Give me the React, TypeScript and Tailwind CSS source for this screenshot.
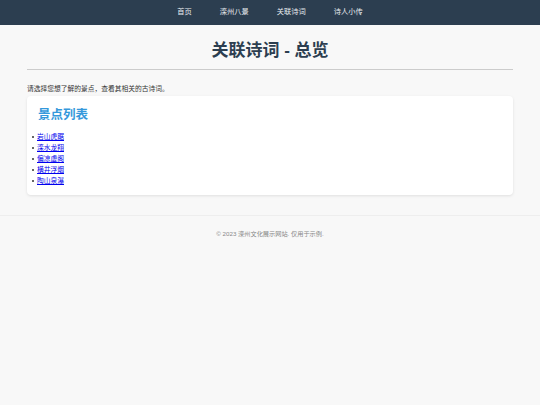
export default function App() {
  const spots = ['岩山虎踞', '滦水龙翔', '偏凉虚阁', '横井浮烟', '陶山泉瀑']
  return (
    <div
      className="min-h-[405px] bg-[#f8f8f8] text-[#333]"
      style={{ fontFamily: '"Liberation Sans", "Noto Sans CJK SC", sans-serif' }}
    >
      <nav className="flex h-[25px] items-center justify-center gap-[28px] bg-[#2c3e50] text-[7.25px] text-[#e8ecef]">
        <a>首页</a>
        <a>滦州八景</a>
        <a>关联诗词</a>
        <a>诗人小传</a>
      </nav>
      <main className="px-[27px]">
        <h1 className="mt-[13px] border-b border-[#ccc] pb-[5px] text-center text-[17px] font-bold leading-[26px] text-[#2c3e50]">
          关联诗词 - 总览
        </h1>
        <p className="mt-[14px] text-[6.75px] leading-[10px]">请选择您想了解的景点，查看其相关的古诗词。</p>
        <section className="mt-[2px] rounded-[4px] bg-white px-[5px] pt-[10px] pb-[9px] shadow-[0_1px_3px_rgba(0,0,0,0.1)]">
          <h2 className="ml-[6px] text-[12.5px] font-bold leading-[18px] text-[#3498db]">景点列表</h2>
          <ul className="mt-[7px] text-[6.75px] leading-[11px]">
            {spots.map((s) => (
              <li key={s} className="flex items-center gap-[3px]">
                <span className="h-[2px] w-[2px] rounded-full bg-[#333]" />
                <a href="#" className="text-[#0000ee] underline">
                  {s}
                </a>
              </li>
            ))}
          </ul>
        </section>
      </main>
      <footer className="mt-[20px] border-t border-[#eee] pt-[13px] text-center text-[6.2px] text-[#888]">
        © 2023 滦州文化展示网站. 仅用于示例.
      </footer>
    </div>
  )
}
